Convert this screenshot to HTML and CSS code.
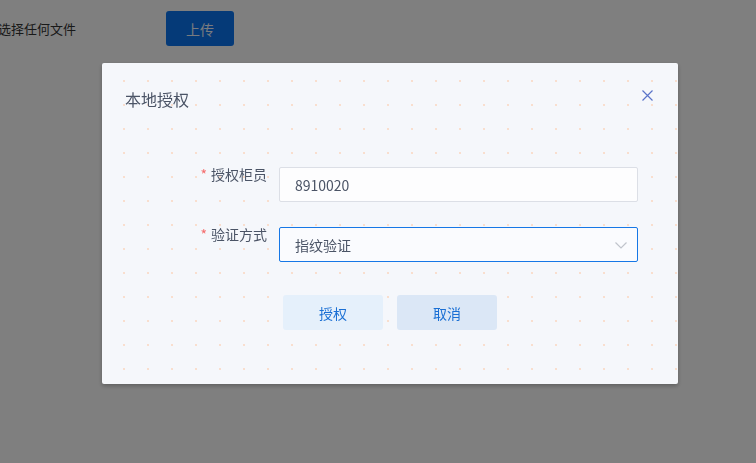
FILE: index.html
```html
<!DOCTYPE html>
<html lang="zh-CN">

<head>
    <meta charset="UTF-8">
    <meta name="viewport" content="width=device-width, initial-scale=1.0">
    <title>本地授权</title>
    <link rel="stylesheet" href="styles.css">
</head>

<body>
    <div class="page">
        <span class="file-tip">选择任何文件</span>
        <button class="upload-btn" type="button">上传</button>
    </div>

    <div class="mask">
        <div class="dialog">
            <div class="dialog-header">
                <span class="dialog-title">本地授权</span>
                <button class="dialog-close" type="button" aria-label="关闭">
                    <svg width="11" height="11" viewBox="0 0 11 11">
                        <path d="M0.5 0.5 L10.5 10.5 M10.5 0.5 L0.5 10.5" stroke="#5b74c9" stroke-width="1.2" fill="none" />
                    </svg>
                </button>
            </div>

            <form class="auth-form">
                <div class="form-item">
                    <label class="form-label"><span class="required">*</span>授权柜员</label>
                    <div class="form-control">
                        <input class="text-input" type="text" value="8910020">
                    </div>
                </div>
                <div class="form-item">
                    <label class="form-label"><span class="required">*</span>验证方式</label>
                    <div class="form-control">
                        <div class="select-box">
                            <span>指纹验证</span>
                            <svg class="arrow" width="12" height="7" viewBox="0 0 12 7">
                                <path d="M0.5 0.5 L6 6 L11.5 0.5" stroke="#c0c4cc" stroke-width="1.2" fill="none" />
                            </svg>
                        </div>
                    </div>
                </div>
            </form>

            <div class="dialog-footer">
                <button class="btn btn-ok" type="button">授权</button>
                <button class="btn btn-cancel" type="button">取消</button>
            </div>
        </div>
    </div>
</body>

</html>
```

FILE: styles.css
```css
body {
    margin: 0;
    font-family: "Noto Sans CJK SC", "Liberation Sans", sans-serif;
    font-size: 14px;
    color: #333;
    background-color: #fff;
    height: 463px;
    overflow: hidden;
}

.page {
    display: flex;
    align-items: center;
    padding-top: 11px;
}

.file-tip {
    margin-left: -2px;
    width: 168px;
    font-size: 13px;
    line-height: 35px;
}

.upload-btn {
    width: 68px;
    height: 35px;
    border: none;
    border-radius: 3px;
    background-color: #0a74f0;
    color: #f2f7ff;
    font-family: inherit;
    font-size: 14px;
}

.mask {
    position: fixed;
    top: 0;
    left: 0;
    right: 0;
    bottom: 0;
    background-color: rgba(0, 0, 0, 0.5);
    padding: 63px 0 0 102px;
}

.dialog {
    width: 576px;
    height: 321px;
    background-color: #f5f7fb;
    border-radius: 2px;
    box-shadow: 0 2px 4px rgba(0, 0, 0, 0.25);
    background-image: radial-gradient(rgba(255, 190, 150, 0.45) 0.7px, transparent 1.1px);
    background-size: 24px 24px;
    background-position: 10px 6px;
}

.dialog-header {
    display: flex;
    justify-content: space-between;
    align-items: center;
    padding: 24px 25px 0 23px;
    height: 24px;
}

.dialog-title {
    font-size: 16px;
    line-height: 24px;
    color: #4b5466;
}

.dialog-close {
    border: none;
    background: none;
    padding: 0;
    width: 11px;
    height: 11px;
    margin-top: -8px;
    display: flex;
}

.auth-form {
    padding-top: 56px;
}

.form-item {
    display: flex;
    align-items: flex-start;
    margin-bottom: 25px;
}

.form-label {
    width: 165px;
    padding-right: 12px;
    text-align: right;
    line-height: 14px;
    color: #4b5466;
}

.required {
    color: #f56c6c;
    margin-right: 4px;
}

.form-control {
    width: 359px;
}

.text-input {
    box-sizing: border-box;
    width: 100%;
    height: 35px;
    padding: 0 15px;
    border: 1px solid #dcdfe6;
    border-radius: 2px;
    background-color: #fdfdfe;
    font-family: inherit;
    font-size: 14px;
    color: #4b5466;
    outline: none;
}

.select-box {
    box-sizing: border-box;
    height: 35px;
    padding: 0 10px 0 15px;
    border: 1px solid #1677e6;
    border-radius: 2px;
    background-color: #fafbfe;
    display: flex;
    align-items: center;
    justify-content: space-between;
    color: #4b5466;
}

.arrow {
    margin-top: 2px;
}

.dialog-footer {
    display: flex;
    justify-content: center;
    gap: 14px;
    padding-top: 8px;
}

.btn {
    width: 100px;
    height: 35px;
    border: none;
    border-radius: 3px;
    font-family: inherit;
    font-size: 14px;
    color: #1a6fd4;
    cursor: pointer;
}

.btn-ok {
    background-color: #e5f0fb;
}

.btn-cancel {
    background-color: #dbe7f6;
}
```
